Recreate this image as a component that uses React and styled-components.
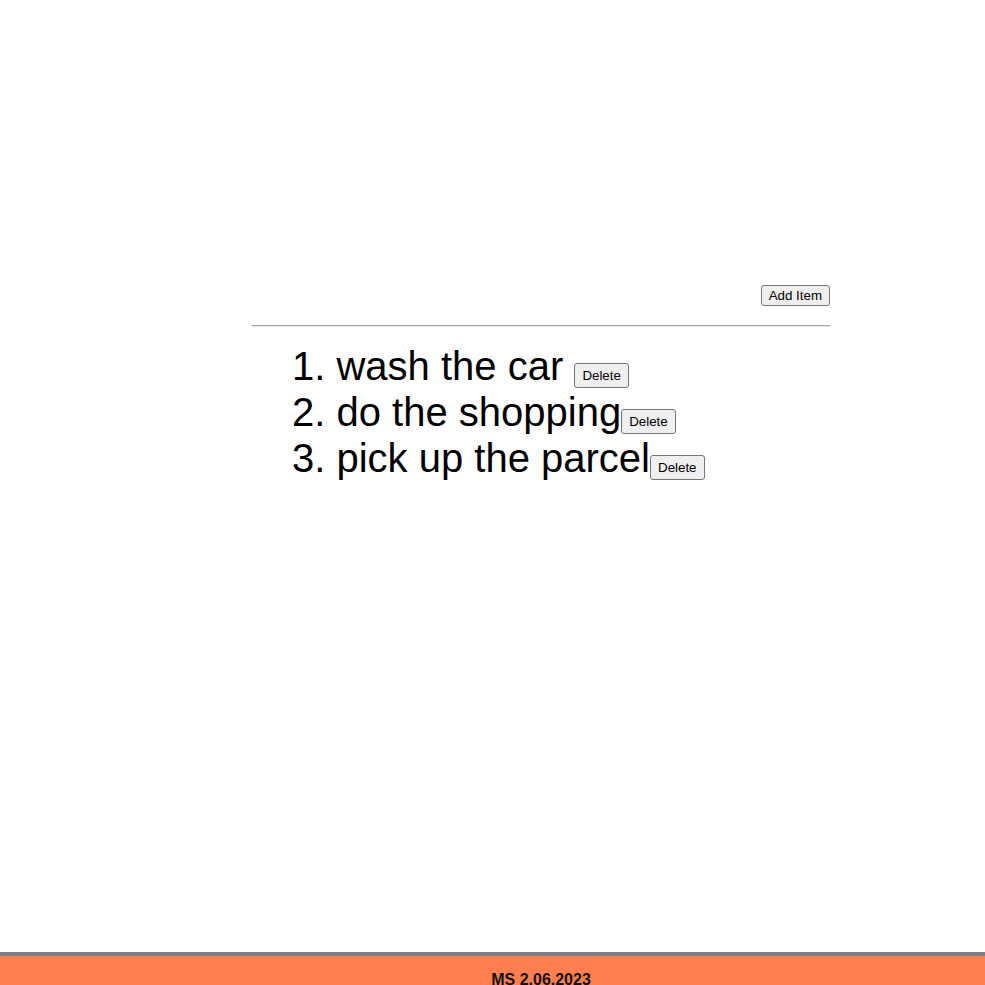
import React, { useState } from 'react';
import styled, { createGlobalStyle } from 'styled-components';

const GlobalStyle = createGlobalStyle`
  body {
    margin: 0;
    font-family: "Liberation Sans", Arial, sans-serif;
    background: #fff;
    color: #000;
  }
`;

const Main = styled.main`
  box-sizing: border-box;
  min-height: 952px;
  padding: 285px 0 0 252px;
`;

const Column = styled.div`
  width: 578px;
`;

const Toolbar = styled.div`
  display: flex;
  justify-content: flex-end;
`;

const Button = styled.button`
  font-family: "Liberation Sans", Arial, sans-serif;
  font-size: 13.333px;
  line-height: normal;
  color: #000;
  background: #efefef;
  border: 1px solid #767676;
  border-radius: 3px;
  padding: ${p => (p.$small ? '4px 7px' : '2px 7px')};
  margin: 0;
  cursor: pointer;
  vertical-align: baseline;
`;

const Divider = styled.hr`
  margin: 19px 0 0;
  border: none;
  border-top: 1px solid #a3a3a3;
  border-bottom: 1px solid #e6e6e6;
  height: 0;
`;

const List = styled.ol`
  margin: 16px 0 0;
  padding-left: 40px;
  list-style-position: inside;
  font-size: 40px;
  line-height: 46px;
`;

const Item = styled.li``;

const Footer = styled.footer`
  background: #ff7f50;
  border-top: 4px solid #808080;
  padding: 15px 0;
`;

const FooterText = styled.div`
  margin-left: 252px;
  width: 578px;
  text-align: center;
  font-size: 16px;
  font-weight: bold;
  color: #111;
`;

export default function App() {
  const [items, setItems] = useState([
    'wash the car ',
    'do the shopping',
    'pick up the parcel',
  ]);

  const addItem = () => setItems([...items, 'new item']);
  const removeItem = i => setItems(items.filter((_, idx) => idx !== i));

  return (
    <>
      <GlobalStyle />
      <Main>
        <Column>
          <Toolbar>
            <Button onClick={addItem}>Add Item</Button>
          </Toolbar>
          <Divider />
          <List>
            {items.map((text, i) => (
              <Item key={i}>
                {text}
                <Button $small onClick={() => removeItem(i)}>Delete</Button>
              </Item>
            ))}
          </List>
        </Column>
      </Main>
      <Footer>
        <FooterText>MS 2.06.2023</FooterText>
      </Footer>
    </>
  );
}
